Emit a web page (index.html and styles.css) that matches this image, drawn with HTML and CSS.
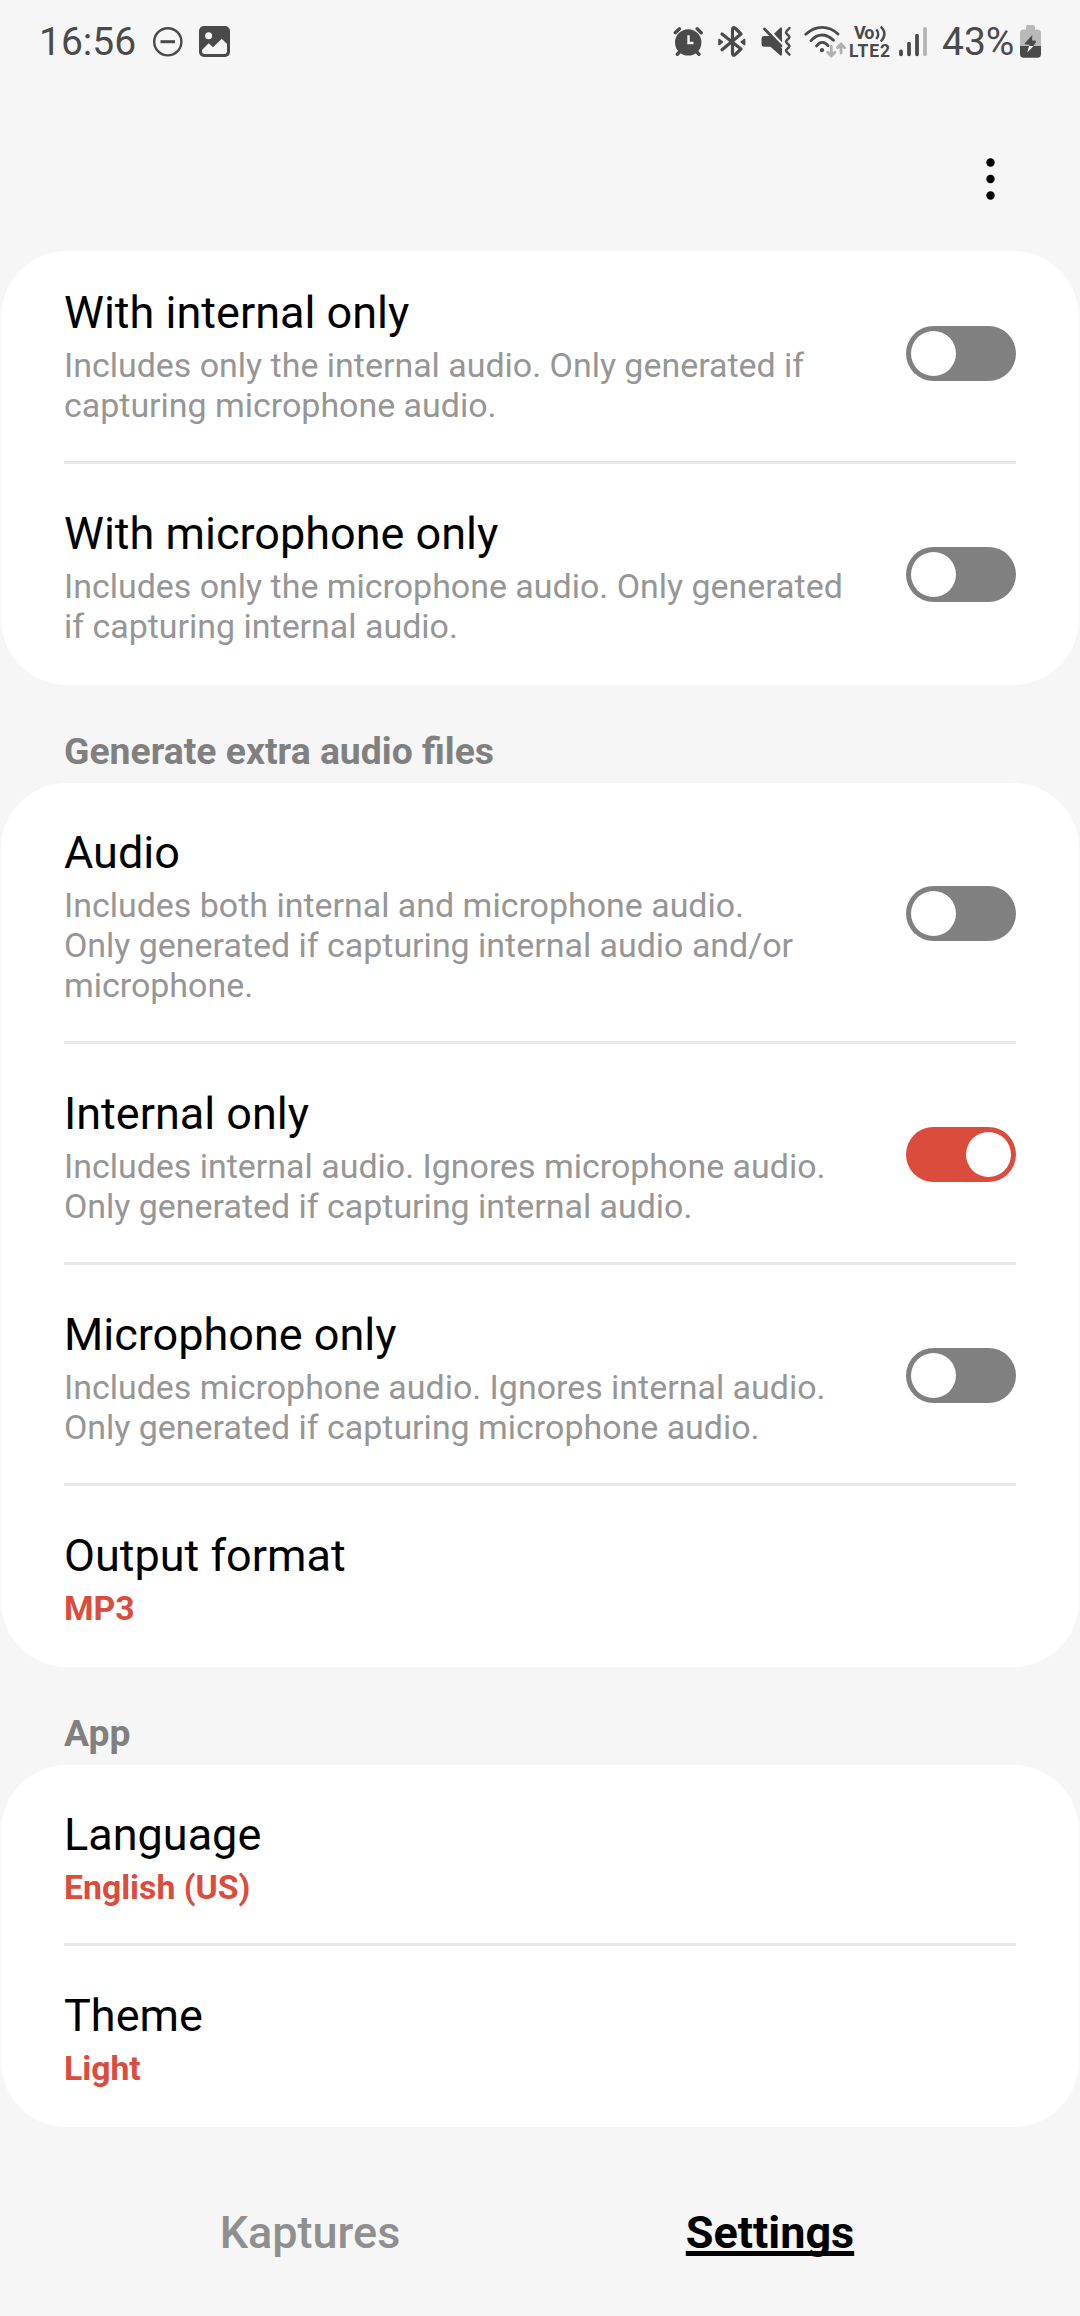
FILE: index.html
```html
<!DOCTYPE html>
<html lang="en">
<head>
<meta charset="utf-8">
<title>Settings</title>
<link rel="stylesheet" href="styles.css">
</head>
<body>
<div class="screen">
  <header class="status">
    <div class="status-group">
      <span class="status-text">16:56</span>
      <svg class="icon-dnd" width="30" height="40" viewBox="153 20 30 40"><circle cx="167.8" cy="41.8" r="13.6" fill="none" stroke="#4a4a4a" stroke-width="2.4"/><path d="M160.5 41.7h14.5" stroke="#4a4a4a" stroke-width="3"/></svg>
      <svg class="icon-image" width="31" height="40" viewBox="199 20 31 40"><rect x="199" y="26" width="31" height="31" rx="5" fill="#4a4a4a"/><circle cx="208.6" cy="35.7" r="3.5" fill="#f6f6f6"/><path d="M202 50L208.7 43.2L213 47.2L221.7 38.7L227 44V51Q227 54 224 54H205Q202 54 202 51Z" fill="#f6f6f6"/></svg>
    </div>
    <div class="status-group">
      <svg width="30" height="40" viewBox="672.5 20 30 40" fill="none" stroke="#4a4a4a" stroke-linecap="round"><circle cx="687.7" cy="42.4" r="13.2" fill="#4a4a4a" stroke="none"/><path d="M674.8 32.7L679 28.8M696.7 28.8L700.7 32.7" stroke-width="3.4"/><path d="M676.8 54.3L680 51M695.5 51L698.5 54.3" stroke-width="3.4"/><path d="M688 35.2V43H693" stroke="#f6f6f6" stroke-width="2.4" stroke-linecap="butt"/></svg>
      <svg class="icon-bt" width="30" height="40" viewBox="717 20 30 40" fill="none" stroke="#4a4a4a" stroke-linecap="round" stroke-linejoin="round"><path d="M722 34L741 49L735 54.6Q732.5 56.4 732.5 53V30Q732.5 26 735.5 28.5L741 34L722 49.8" stroke-width="3.2"/><path d="M719 39.5L722.3 42L719 44.5ZM744.6 39.5L741.3 42L744.6 44.5Z" fill="#4a4a4a" stroke-width="1.6"/></svg>
      <svg class="icon-mute" width="31" height="40" viewBox="760.5 20 31 40"><path d="M773.5 33.8L779.5 28Q781.5 26.2 781.5 29V42.2ZM764 36H769.5L781.5 48.5V54Q781.5 57 779 54.8L770 46.7H764Q761 46.7 761 44V39Q761 36 764 36Z" fill="#4a4a4a"/><path d="M764 29L780.5 46" stroke="#4a4a4a" stroke-width="2.8" stroke-linecap="round"/><path d="M789 28L786 31.3Q785 32.5 786 33.7L788.5 36.2Q789.5 37.2 788.5 38.2L786 40.7Q785 41.7 786 42.7L788.5 45.2Q789.5 46.2 788.5 47.2L786 49.7Q785 50.7 786 51.7L789 54.7" fill="none" stroke="#4a4a4a" stroke-width="2.4" stroke-linecap="round"/></svg>
      <svg class="icon-wifi" width="42" height="40" viewBox="804 20 42 40" fill="none" stroke="#4a4a4a" stroke-width="2.8" stroke-linecap="round"><path d="M805.8 34.3Q813 27.3 822 27.3T838 34M811 40.6Q816 35 822 35T833.5 40.3M816.6 46Q819 42.3 822.3 42.3T828 45.6"/><circle cx="822" cy="50.2" r="2.1" fill="#4a4a4a" stroke="none"/><path d="M831.3 46.5V56M827.7 52.3L831.3 56L834.9 52.3M841 53V44M837.4 47.7L841 44L844.6 47.7" stroke="#b0b0b0"/></svg>
      <svg class="icon-volte" width="42" height="40" viewBox="849 20 42 40"><text class="net" x="854" y="39.2" font-size="18" textLength="20.5">Vo</text><text class="net" x="849" y="56.6" font-size="17.5" textLength="41">LTE2</text><path d="M876.3 29.5Q880.3 34.2 876.3 39M880.8 26.5Q888 34 880.8 41.5" fill="none" stroke="#4a4a4a" stroke-width="2.4"/></svg>
      <svg class="icon-signal" width="28" height="40" viewBox="899 20 28 40" stroke="#4a4a4a" stroke-width="3.8" stroke-linecap="round"><path d="M901 51.3V54.3M909 43.6V54.3M917 35.6V54.3"/><path d="M925 28.8V54.3" stroke="#b5b5b5"/></svg>
      <span class="status-text battery-level">43%</span>
      <svg class="icon-battery" width="21" height="40" viewBox="1020 20 21 40"><path d="M1026 29.5V27Q1026 25 1028 25H1033Q1035 25 1035 27V29.5H1037.5Q1041 29.5 1041 33V46H1020V33Q1020 29.5 1023.5 29.5Z" fill="#b9b9b9"/><path d="M1020 46H1041V54Q1041 57.7 1037.5 57.7H1023.5Q1020 57.7 1020 54Z" fill="#4a4a4a"/><path d="M1032.3 35L1024.8 43.3Q1024.5 44.5 1026 44.5H1029.5L1029 46H1033.4L1036 42Q1036.3 40.8 1035 40.6H1032Z" fill="#4a4a4a"/><path d="M1029 46H1033.6L1027.3 52.5Z" fill="#f6f6f6"/></svg>
    </div>
  </header>

  <div class="toolbar">
    <svg width="11" height="44" viewBox="0 0 11 44"><circle cx="5.5" cy="5.5" r="4.2"/><circle cx="5.5" cy="22" r="4.2"/><circle cx="5.5" cy="38.5" r="4.2"/></svg>
  </div>

  <main>
    <section class="card card-scrolled">
      <div class="row"><div class="copy"><h2>With internal only</h2><p>Includes only the internal audio. Only generated if<br>capturing microphone audio.</p></div><span class="switch"></span></div>
      <div class="row"><div class="copy"><h2>With microphone only</h2><p>Includes only the microphone audio. Only generated<br>if capturing internal audio.</p></div><span class="switch"></span></div>
    </section>
    <h1>Generate extra audio files</h1>
    <section class="card">
      <div class="row"><div class="copy"><h2>Audio</h2><p>Includes both internal and microphone audio.<br>Only generated if capturing internal audio and/or<br>microphone.</p></div><span class="switch"></span></div>
      <div class="row"><div class="copy"><h2>Internal only</h2><p>Includes internal audio. Ignores microphone audio.<br>Only generated if capturing internal audio.</p></div><span class="switch on"></span></div>
      <div class="row"><div class="copy"><h2>Microphone only</h2><p>Includes microphone audio. Ignores internal audio.<br>Only generated if capturing microphone audio.</p></div><span class="switch"></span></div>
      <div class="row"><div class="copy"><h2>Output format</h2><p class="value">MP3</p></div></div>
    </section>
    <h1>App</h1>
    <section class="card">
      <div class="row"><div class="copy"><h2>Language</h2><p class="value">English (US)</p></div></div>
      <div class="row"><div class="copy"><h2>Theme</h2><p class="value">Light</p></div></div>
    </section>
  </main>

  <nav class="tabs">
    <span class="tab">Kaptures</span>
    <span class="tab active">Settings</span>
  </nav>
</div>
</body>
</html>
```
FILE: styles.css
```css
* { box-sizing: border-box; }
body {
  margin: 0;
  background: #f6f6f6;
  font-family: Roboto, sans-serif;
  color: #000;
}
h1, h2, p { margin: 0; }
svg { display: block; flex: none; }
.screen {
  width: 1080px;
  height: 2316px;
  overflow: hidden;
  display: flex;
  flex-direction: column;
}

/* Status bar */
.status {
  height: 80px;
  padding: 0 39px 0 39px;
  display: flex;
  justify-content: space-between;
  align-items: center;
}
.status-group { display: flex; align-items: center; }
.status-text {
  font-size: 39px;
  line-height: 46px;
  color: #4a4a4a;
  width: 98px;
  padding-top: 4px;
}
.icon-dnd { margin-left: 16px; }
.icon-image { margin-left: 16px; }
.icon-bt { margin-left: 14.5px; }
.icon-mute { margin-left: 13.5px; }
.icon-wifi { margin-left: 12.5px; }
.icon-volte { margin-left: 3px; }
.icon-signal { margin-left: 8px; }
.battery-level { width: 73px; margin-left: 15px; white-space: nowrap; }
.icon-battery { margin-left: 5px; }
.net { font-weight: 700; fill: #4a4a4a; }

.toolbar {
  height: 171px;
  padding: 76.5px 84px 0 0;
  display: flex;
  justify-content: flex-end;
}

/* Preference groups */
.card {
  margin: 0 1px;
  padding: 0 63px;
  background: #fff;
  border-radius: 66px;
}
.card-scrolled .row:first-child { margin-top: -8px; }
.card-scrolled { overflow: hidden; }
.row {
  display: flex;
  justify-content: space-between;
  align-items: center;
  border-bottom: 3px solid #e8e8e8;
}
.row:last-child { border-color: transparent; }
.copy { padding: 43px 0 35px; }
h2 {
  font-size: 45px;
  line-height: 53px;
  font-weight: 400;
}
p {
  margin-top: 7px;
  font-size: 33.95px;
  line-height: 40px;
  color: #969696;
  white-space: nowrap;
}
.value { color: #db4c3c; font-size: 33.75px; font-weight: 700; }
h1 {
  height: 98px;
  padding: 45px 64px 0;
  font-size: 37.35px;
  line-height: 43px;
  font-weight: 700;
  color: #808080;
}
.switch {
  flex: none;
  width: 110px;
  height: 55px;
  margin-bottom: -3px;
  padding: 5px;
  border-radius: 28px;
  background: #808080;
  display: flex;
}
.switch::before {
  content: "";
  width: 45px;
  height: 45px;
  border-radius: 50%;
  background: #fff;
}
.switch.on { background: #db4c3c; justify-content: flex-end; }

/* Bottom tabs */
.tabs {
  padding: 79px 80px 0;
  display: grid;
  grid-template-columns: 460px 460px;
  text-align: center;
  font-size: 45px;
  line-height: 53px;
}
.tab { font-weight: 500; color: #8f8f8f; }
.active {
  font-weight: 700;
  color: #000;
  text-decoration: underline;
  text-decoration-skip-ink: none;
  text-decoration-thickness: 5px;
  text-underline-offset: 3px;
}
```
